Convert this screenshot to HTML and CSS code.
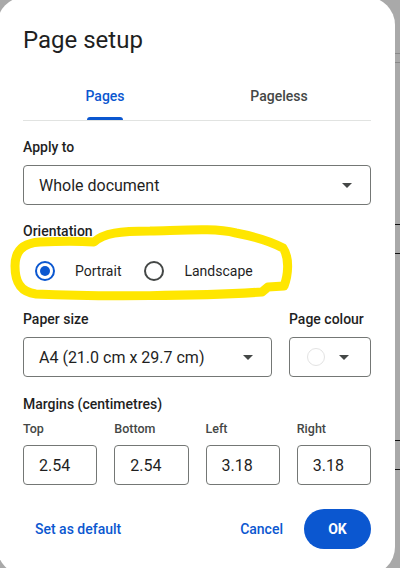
FILE: index.html
```html
<!DOCTYPE html>
<html lang="en">
<head>
<meta charset="utf-8">
<title>Page setup</title>
<link rel="stylesheet" href="styles.css">
</head>
<body>
<div class="backdrop-marks">
  <span class="mark mark-gray m1"></span>
  <span class="mark mark-gray m2"></span>
  <span class="mark m3"></span>
  <span class="mark m4"></span>
  <span class="mark m5"></span>
  <span class="mark m6"></span>
</div>
<div class="dialog">
  <h1 class="title">Page setup</h1>
  <div class="tabs">
    <div class="tab active"><span class="tab-text">Pages</span><span class="indicator"></span></div>
    <div class="tab"><span class="tab-text">Pageless</span></div>
  </div>

  <div class="label apply-label">Apply to</div>
  <div class="select select-wide">
    <span class="select-text">Whole document</span>
    <span class="caret"></span>
  </div>

  <div class="label orient-label">Orientation</div>
  <div class="radio-row">
    <span class="radio checked"></span>
    <span class="radio-text">Portrait</span>
    <span class="radio"></span>
    <span class="radio-text">Landscape</span>
  </div>

  <div class="paper-row">
    <div class="paper-col">
      <div class="label">Paper size</div>
      <div class="select select-paper">
        <span class="select-text">A4 (21.0 cm x 29.7 cm)</span>
        <span class="caret"></span>
      </div>
    </div>
    <div class="colour-col">
      <div class="label">Page colour</div>
      <div class="select select-colour">
        <span class="swatch"></span>
        <span class="caret"></span>
      </div>
    </div>
  </div>

  <div class="label margins-label">Margins (centimetres)</div>
  <div class="margins">
    <div class="margin-field"><div class="sublabel">Top</div><div class="input">2.54</div></div>
    <div class="margin-field"><div class="sublabel">Bottom</div><div class="input">2.54</div></div>
    <div class="margin-field"><div class="sublabel">Left</div><div class="input">3.18</div></div>
    <div class="margin-field"><div class="sublabel">Right</div><div class="input">3.18</div></div>
  </div>

  <div class="actions">
    <span class="text-btn default-btn">Set as default</span>
    <span class="spacer"></span>
    <span class="text-btn cancel-btn">Cancel</span>
    <span class="ok-btn">OK</span>
  </div>
</div>
<svg class="annotation" width="400" height="568" viewBox="0 0 400 568">
  <path d="M 94 242 C 104 233, 120 231, 150 231 C 190 230, 215 228, 236 233 C 257 237, 270 241, 283 248 C 290 258, 288 276, 284 286 L 268 287 L 262 292 C 200 296, 100 297, 36 294 C 19 292, 15 280, 15 266 C 15 252, 22 243, 40 242 C 60 241, 80 241, 94 242 Z" fill="none" stroke="#ffe600" stroke-width="9" stroke-linejoin="round" stroke-linecap="round"/>
</svg>
</body>
</html>
```
FILE: styles.css
```css
html, body {
  margin: 0;
  padding: 0;
}
body {
  width: 400px;
  height: 568px;
  overflow: hidden;
  background: #a9a9a9;
  position: relative;
  font-family: Roboto, "Liberation Sans", sans-serif;
  color: #1f1f1f;
}
.backdrop-marks {
  position: absolute;
  left: 395px;
  top: 0;
  width: 5px;
  height: 568px;
}
.mark {
  position: absolute;
  left: 0;
  width: 5px;
  height: 1px;
  background: #111;
}
.mark-gray { background: #888; }
.m1 { top: 53px; }
.m2 { top: 62px; }
.m3 { top: 224px; }
.m4 { top: 253px; }
.m5 { top: 440px; }
.m6 { top: 469px; }

.dialog {
  position: relative;
  margin: -3px 0 0 -3px;
  width: 398px;
  height: 578px;
  box-sizing: border-box;
  background: #fff;
  border-radius: 28px;
  padding: 27px 24px 0 26px;
}
.title {
  margin: 0;
  font-size: 24px;
  line-height: 32px;
  font-weight: 400;
  color: #1f1f1f;
}
.tabs {
  display: flex;
  margin-top: 16px;
  height: 48px;
  border-bottom: 1px solid #e1e3e1;
}
.tab {
  flex: 1;
  position: relative;
  display: flex;
  align-items: center;
  justify-content: center;
  padding-right: 10px;
  font-size: 14px;
  font-weight: 500;
  color: #444746;
}
.tab.active { color: #0b57d0; }
.indicator {
  position: absolute;
  bottom: 0;
  left: 64px;
  width: 36px;
  height: 3px;
  border-radius: 3px 3px 0 0;
  background: #0b57d0;
}
.label {
  font-size: 14px;
  line-height: 20px;
  font-weight: 500;
  color: #1f1f1f;
}
.apply-label { margin-top: 16px; }
.select {
  box-sizing: border-box;
  height: 40px;
  border: 1px solid #747775;
  border-radius: 4px;
  display: flex;
  align-items: center;
  margin-top: 8px;
}
.select-text {
  flex: 1;
  font-size: 16px;
  color: #1f1f1f;
}
.select-wide, .select-paper {
  padding: 0 18px 0 15px;
}
.caret {
  width: 0;
  height: 0;
  border-left: 5px solid transparent;
  border-right: 5px solid transparent;
  border-top: 5px solid #444746;
}
.orient-label { margin-top: 16px; }
.radio-row {
  display: flex;
  align-items: center;
  height: 40px;
  margin-top: 10px;
  font-size: 14px;
  color: #1f1f1f;
}
.radio {
  box-sizing: border-box;
  width: 20px;
  height: 20px;
  border-radius: 50%;
  border: 2px solid #444746;
  margin-left: 12px;
  margin-right: 20px;
  position: relative;
}
.radio.checked {
  border-color: #0b57d0;
}
.radio.checked::after {
  content: "";
  position: absolute;
  left: 3px;
  top: 3px;
  width: 10px;
  height: 10px;
  border-radius: 50%;
  background: #0b57d0;
}
.radio-text + .radio { margin-left: 23px; }
.radio-text { font-size: 14px; }

.paper-row {
  display: flex;
  gap: 17px;
  margin-top: 18px;
}
.paper-col { width: 249px; }
.colour-col { width: 82px; }
.select-colour {
  padding-left: 17px;
}
.swatch {
  box-sizing: border-box;
  width: 18px;
  height: 18px;
  border-radius: 50%;
  border: 1px solid #e3e3e3;
  margin-right: 14px;
}
.margins-label { margin-top: 17px; }
.margins {
  display: grid;
  grid-template-columns: repeat(4, 1fr);
  gap: 17px;
  margin-top: 7px;
}
.sublabel {
  font-size: 12.5px;
  line-height: 16px;
  font-weight: 500;
  color: #444746;
}
.input {
  box-sizing: border-box;
  height: 40px;
  margin-top: 8px;
  border: 1px solid #747775;
  border-radius: 4px;
  padding-left: 15px;
  display: flex;
  align-items: center;
  font-size: 16px;
  color: #1f1f1f;
}
.actions {
  display: flex;
  align-items: center;
  margin-top: 24px;
  height: 40px;
  font-size: 14px;
  font-weight: 500;
}
.text-btn { color: #0b57d0; }
.default-btn { margin-left: 12px; }
.spacer { flex: 1; }
.cancel-btn { margin-right: 21px; }
.ok-btn {
  width: 67px;
  height: 40px;
  border-radius: 20px;
  background: #0b57d0;
  color: #fff;
  font-weight: 700;
  display: flex;
  align-items: center;
  justify-content: center;
}
.annotation {
  position: absolute;
  left: 0;
  top: 0;
  pointer-events: none;
}
```
